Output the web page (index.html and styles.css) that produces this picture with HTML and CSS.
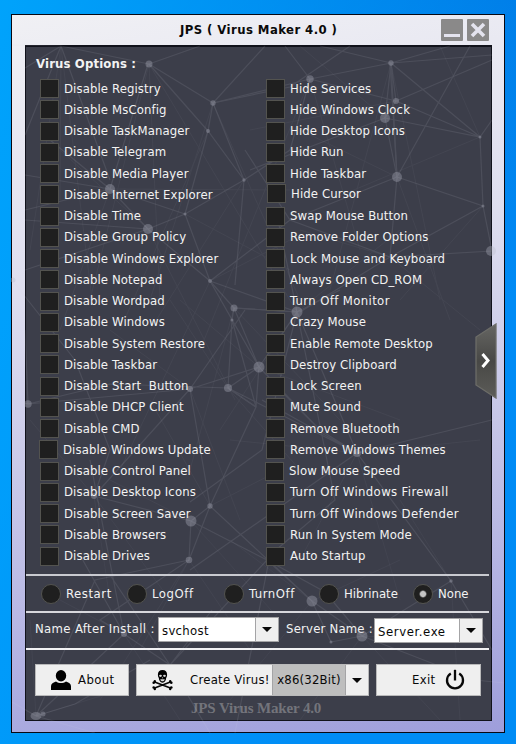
FILE: index.html
```html
<!DOCTYPE html>
<html lang="en">
<head>
<meta charset="utf-8">
<title>JPS ( Virus Maker 4.0 )</title>
<link rel="stylesheet" href="styles.css">
</head>
<body>
<main class="window">
  <header class="titlebar">
    <h1 class="title">JPS ( Virus Maker 4.0 )</h1>
    <div class="controls">
      <span class="control"><svg viewBox="0 0 22 22"><path d="M3 16.5h16" stroke="#e4e3ee" stroke-width="3"/></svg></span>
      <span class="control"><svg viewBox="0 0 22 22"><path d="M5 5l12 12M17 5L5 17" stroke="#e4e3ee" stroke-width="3.6"/></svg></span>
    </div>
  </header>
  <section class="panel">
    <h2 class="heading">Virus Options :</h2>
    <div class="options">
      <ul class="column">
        <li class="option">Disable Registry</li>
        <li class="option">Disable MsConfig</li>
        <li class="option">Disable TaskManager</li>
        <li class="option">Disable Telegram</li>
        <li class="option">Disable Media Player</li>
        <li class="option">Disable Internet Explorer</li>
        <li class="option">Disable Time</li>
        <li class="option">Disable Group Policy</li>
        <li class="option">Disable Windows Explorer</li>
        <li class="option">Disable Notepad</li>
        <li class="option">Disable Wordpad</li>
        <li class="option">Disable Windows</li>
        <li class="option">Disable System Restore</li>
        <li class="option">Disable Taskbar</li>
        <li class="option">Disable Start&nbsp; Button</li>
        <li class="option">Disable DHCP Client</li>
        <li class="option">Disable CMD</li>
        <li class="option outdent">Disable Windows Update</li>
        <li class="option">Disable Control Panel</li>
        <li class="option">Disable Desktop Icons</li>
        <li class="option">Disable Screen Saver</li>
        <li class="option">Disable Browsers</li>
        <li class="option">Disable Drives</li>
      </ul>
      <ul class="column">
        <li class="option">Hide Services</li>
        <li class="option">Hide Windows Clock</li>
        <li class="option">Hide Desktop Icons</li>
        <li class="option">Hide Run</li>
        <li class="option">Hide Taskbar</li>
        <li class="option raised">Hide Cursor</li>
        <li class="option">Swap Mouse Button</li>
        <li class="option">Remove Folder Options</li>
        <li class="option">Lock Mouse and Keyboard</li>
        <li class="option">Always Open CD_ROM</li>
        <li class="option wide">Turn Off Monitor</li>
        <li class="option"><span class="clipped">Crazy Mouse</span></li>
        <li class="option">Enable Remote Desktop</li>
        <li class="option">Destroy Clipboard</li>
        <li class="option">Lock Screen</li>
        <li class="option">Mute Sound</li>
        <li class="option">Remove Bluetooth</li>
        <li class="option">Remove Windows Themes</li>
        <li class="option outdent">Slow Mouse Speed</li>
        <li class="option wide">Turn Off Windows Firewall</li>
        <li class="option wide">Turn Off Windows Defender</li>
        <li class="option">Run In System Mode</li>
        <li class="option">Auto Startup</li>
      </ul>
    </div>
    <div class="radios">
      <span class="radio spaced">Restart</span>
      <span class="radio spaced">LogOff</span>
      <span class="radio spaced">TurnOff</span>
      <span class="radio">Hibrinate</span>
      <span class="radio checked">None</span>
    </div>
    <div class="names">
      <span class="label install">Name After Install :</span>
      <div class="combo combo-install"><span class="value">svchost</span><span class="drop"></span></div>
      <span class="label server">Server Name :</span>
      <div class="combo combo-server"><span class="value">Server.exe</span><span class="drop"></span></div>
    </div>
    <div class="actions">
      <div class="button about">
        <svg width="20" height="20" viewBox="0 0 20 20"><ellipse cx="10" cy="5.7" rx="5.2" ry="5.7"/><path d="M0 20v-3.5c0-2.7 1.5-4 5-5.1 3 2 7 2 10 0 3.500 1.100 5 2.400 5 5.100V20z"/></svg>
        <span>About</span>
      </div>
      <div class="button create">
        <span class="make">
          <svg width="21" height="21" viewBox="0 0 21 21">
            <path d="M2 11.800l17 6.400M19 11.800L2 18.200" stroke="#080808" stroke-width="1.700"/>
            <circle cx="1.700" cy="12.800" r="1.300"/><circle cx="2.800" cy="11.300" r="1.200"/><circle cx="19.300" cy="12.800" r="1.300"/><circle cx="18.200" cy="11.300" r="1.200"/>
            <circle cx="1.700" cy="17.500" r="1.300"/><circle cx="2.800" cy="19" r="1.200"/><circle cx="19.300" cy="17.500" r="1.300"/><circle cx="18.200" cy="19" r="1.200"/>
            <path d="M10.500 0C7.500 0 5.800 2 5.900 4.700c0 1.700.5 2.300.9 3.300.2 2.700 1.500 4.700 3.700 4.700s3.500-2 3.700-4.700c.4-1 .9-1.600.9-3.300C15.200 2 13.500 0 10.500 0z"/>
            <g fill="#d8d8d8"><ellipse cx="8.500" cy="5.800" rx="1.400" ry="1.100"/><ellipse cx="12.500" cy="5.800" rx="1.400" ry="1.100"/><path d="M10.500 7l-.7 1.200h1.400zM8.300 9.200h4.400c-.2 1.400-1 2-2.200 2s-2-.6-2.200-2z"/></g>
          </svg>
          <span>Create Virus!</span>
        </span>
        <span class="arch">x86(32Bit)</span>
        <span class="drop"></span>
      </div>
      <div class="button exit">
        <span>Exit</span>
        <svg width="20" height="22" viewBox="0 0 20 22" fill="none" stroke="#080808" stroke-width="2.300"><path d="M5.800 4.600A8 8 0 1 0 14.200 4.600"/><path d="M10 .8v10.700"/></svg>
      </div>
    </div>
    <footer class="watermark">JPS Virus Maker 4.0</footer>
  </section>
  <svg class="mesh" viewBox="11 14 494 719" aria-hidden="true">
    <g stroke="#d8dae6" stroke-width="1" opacity=".045" fill="none">
      <path d="M61 46L92 300M61 46L30 250M61 46L60 200M149 64L90 300M149 64L160 300M149 64L297 312M213 103L150 300M213 103L300 300M208 131L120 330M310 79L200 350M310 79L360 250M391 63L330 290M391 63L440 300M480 137L330 200M480 137L440 46M385 118L300 46M396 101L250 130"/>
      <path d="M110 189L60 330M110 189L290 190M148 229L60 150M148 229L235 400M185 214L290 270M244 180L150 330M210 281L120 470M210 281L290 240M234 308L190 470M234 308L340 420M259 367L180 300M259 367L400 420M297 312L220 430M297 312L400 230M397 177L300 130M397 177L450 320M483 206L400 300M390 257L300 230M390 257L480 330"/>
      <path d="M190 389L110 330M190 389L240 520M228 388L170 300M228 388L300 470M94 496L30 420M94 496L110 600M94 496L170 600M210 506L150 400M210 506L280 470M191 521L110 480M191 521L280 620M189 560L250 650M189 560L140 650M189 560L100 700M357 453L400 600M357 453L300 560M357 453L480 440M357 453L230 440M312 601L230 540M312 601L400 560M312 601L230 700M362 636L300 720M362 636L440 720M362 636L440 640M451 581L400 500M451 581L460 720M124 634L60 600M124 634L180 720M36 716L120 690M36 716L30 620"/>
    </g>
    <g stroke="#d8dae6" stroke-width="1.200" opacity=".1" fill="none">
      <path d="M61 46L25 68M61 46L149 64M61 46L25 135M61 46L110 180M149 64L213 103M149 64L208 131L244 180M213 103L208 131L185 214M213 103L244 180M149 64L200 46M213 103L310 79L391 63"/>
      <path d="M213 103L265 46M213 103L290 87L350 46M310 79L285 46M310 79L396 101L391 63L385 118L396 101M391 63L480 137L396 101M391 63L492 55M391 63L320 46M391 63L450 46M396 101L492 60M385 118L480 137L492 120M385 118L250 170M385 118L397 177L391 63"/>
      <path d="M110 189L25 175M110 189L148 229L185 214L244 180L290 150L310 79M110 189L185 214M110 189L148 64M244 180L235 285M148 229L25 220M148 229L25 270M148 229L210 281L234 308L232 320M148 229L110 189L50 140M185 214L210 281M110 189L25 210M210 281L290 220L397 177M210 281L297 312L234 308"/>
      <path d="M397 177L483 206L492 251L390 257L290 220L245 150M397 177L390 257L300 312M483 206L390 257M483 206L480 137M397 177L390 63M297 312L234 308L259 367L297 312M232 320L228 388L259 367M232 320L256 407L259 367M210 281L259 367"/>
      <path d="M297 312L278 220M297 312L340 290M297 312L262 450L190 502M297 312L335 500L270 555M12 280L75 360L110 450L94 496M28 404L190 389L259 367M28 404L110 384L228 388L256 407M190 389L245 310M190 389L210 506L189 560"/>
      <path d="M190 389L94 496L191 521M228 388L256 407L210 506M259 367L320 430L357 453M228 388L357 453M320 430L280 390M357 453L262 400M357 453L504 417M357 453L297 312M357 453L451 581L492 650M357 453L190 570M210 506L191 521L189 560L100 620L124 634"/>
      <path d="M210 506L312 601L362 636L325 592L267 560L191 521M189 560L95 580L36 716L124 634L170 665L267 560M36 716L75 704L150 660M124 634L80 555M124 634L90 460M170 665L110 575M170 665L212 610M170 665L210 733M331 642L312 601M331 642L362 636M362 636L451 581M362 636L475 680L504 683M312 601L267 560"/>
      <path d="M36 716L12 702M36 716L95 733M12 45L61 46M28 404L25 330M28 404L12 400M397 177L470 46M270 555L235 733"/>
    </g>
    <g fill="#b9bbc9" opacity=".33">
      <circle cx="149" cy="64" r="3.500"/><circle cx="213" cy="103" r="2.700"/><circle cx="208" cy="131" r="2"/><circle cx="310" cy="79" r="3.700"/><circle cx="391" cy="63" r="2.700"/><circle cx="396" cy="101" r="3"/><circle cx="385" cy="118" r="5"/><circle cx="110" cy="189" r="5"/><circle cx="148" cy="229" r="5"/><circle cx="185" cy="214" r="1.500"/><circle cx="244" cy="180" r="1.700"/><circle cx="397" cy="177" r="5"/><circle cx="480" cy="137" r="1.500"/><circle cx="483" cy="206" r="1.500"/><circle cx="491" cy="251" r="5"/><circle cx="210" cy="281" r="2"/><circle cx="234" cy="308" r="3.500"/><circle cx="232" cy="320" r="1.500"/><circle cx="297" cy="312" r="5.500"/><circle cx="259" cy="367" r="5.500"/><circle cx="228" cy="388" r="4"/><circle cx="190" cy="389" r="3"/><circle cx="28" cy="404" r="3.700"/><circle cx="94" cy="496" r="3"/><circle cx="210" cy="506" r="2.700"/><circle cx="191" cy="521" r="5.500"/><circle cx="189" cy="560" r="3.300"/><circle cx="357" cy="453" r="4"/><circle cx="312" cy="601" r="5.500"/><circle cx="362" cy="636" r="5.500"/><circle cx="331" cy="642" r="1.500"/><circle cx="451" cy="581" r="1.700"/><circle cx="124" cy="634" r="3"/><ellipse cx="36" cy="716" rx="5.500" ry="4"/><circle cx="43" cy="714" r="2.500"/><circle cx="13" cy="280" r="2.500"/>
    </g>
  </svg>
  <div class="side-tab">
    <svg viewBox="0 0 22 76">
      <defs><linearGradient id="tab" x2="0" y2="1"><stop stop-color="#666663"/><stop offset=".5" stop-color="#484846"/><stop offset="1" stop-color="#5c5c58"/></linearGradient></defs>
      <path d="M21 1L1 14v48l20 13z" fill="url(#tab)" stroke="#6c6c68" stroke-width="1.300"/><path d="M7.500 31l5.500 6.500-5.500 6.500" fill="none" stroke="#fff" stroke-width="3"/>
    </svg>
  </div>
</main>
</body>
</html>
```
FILE: styles.css
```css
* { box-sizing: border-box; }
body {
  margin: 0;
  width: 516px;
  height: 744px;
  overflow: hidden;
  padding: 14px 11px 11px;
  font: 13px/16px "DejaVu Sans Condensed", "DejaVu Sans", sans-serif;
  font-stretch: condensed;
  background:
    linear-gradient(110deg, rgba(0, 170, 255, .85), rgba(0, 150, 250, 0) 75%),
    linear-gradient(#007ae6, #008bf5 40%, #008cf5);
}
.window {
  position: relative;
  width: 494px;
  height: 719px;
  padding: 0 12px 12px 13px;
  border: 1px solid #080812;
  background: linear-gradient(170deg, #f0f0f4, #dedeef 35%, #b8b8e4 75%, #9e9edb);
}
.titlebar {
  display: flex;
  align-items: center;
  height: 30px;
}
.title {
  margin: 0 0 0 155px;
  width: 160px;
  white-space: nowrap;
  font-size: 13px;
  letter-spacing: .42px;
  color: #0a0a0a;
}
.controls {
  display: flex;
  gap: 4px;
  margin-left: 101px;
}
.control {
  width: 22px;
  height: 22px;
  background: #8a8989;
  border-radius: 1px;
}
.control svg { display: block; }
.panel {
  width: 467px;
  height: 676px;
  border: 1px solid #11121b;
  border-top-width: 2px;
  background: #3c3e4a;
  color: #f3f3f3;
}
.heading {
  margin: 9px 0 6px 10px;
  font-size: 13px;
  line-height: 16px;
  letter-spacing: .15px;
}
.options {
  display: grid;
  grid-template-columns: 226px 1fr;
  padding-left: 14px;
  height: 496px;
}
.column {
  list-style: none;
  margin: 0;
  padding: 0;
}
.option {
  position: relative;
  display: flex;
  align-items: center;
  gap: 5px;
  height: 21.25px;
  white-space: nowrap;
  letter-spacing: .11px;
}
.option::before {
  content: "";
  flex: none;
  width: 17px;
  height: 17px;
  border: 1px solid #53534f;
  background: #1f1f1f;
}
.wide { letter-spacing: .37px; }
.outdent { margin-left: -1px; }
.raised { padding: 0 0 2px 1px; }
.clipped {
  width: 76px;
  overflow: hidden;
}
.radios {
  display: grid;
  grid-template-columns: 86px 97px 95px 94px auto;
  align-items: center;
  width: 463px;
  height: 37px;
  padding-left: 15px;
  border-top: 2px solid #c9cad0;
}
.radio {
  position: relative;
  display: flex;
  align-items: center;
  gap: 5px;
}
.spaced { letter-spacing: .55px; }
.radio::before {
  content: "";
  width: 18px;
  height: 18px;
  border: 1px solid #53534f;
  border-radius: 50%;
  background: #1f1f1f;
}
.checked::before { background: radial-gradient(circle, #c4c4c4 0 2.5px, #1f1f1f 4px); }
.names {
  display: flex;
  align-items: flex-start;
  width: 463px;
  height: 37px;
  padding: 4px 0 0 9px;
  border-top: 2px solid #d7d7dc;
}
.label {
  margin-top: 4px;
  white-space: nowrap;
}
.install { width: 123px; letter-spacing: .35px; }
.server { width: 88px; margin-left: 7px; letter-spacing: .2px; }
.combo {
  display: flex;
  height: 25px;
  border: 1px solid #a4a4a6;
  background: #fff;
  color: #080808;
}
.combo-install { width: 121px; letter-spacing: .3px; }
.combo-server { width: 109px; margin-top: 1px; letter-spacing: .6px; }
.value { flex: 1; padding: 5px 0 0 3px; }
.drop {
  display: grid;
  place-items: center;
  width: 23px;
  border-left: 1px solid #a4a4a6;
  background: #efefef;
}
.drop::before {
  content: "";
  border: 5px solid transparent;
  border-top-color: #080808;
  border-bottom: 0;
}
.actions {
  display: flex;
  gap: 7px;
  width: 463px;
  height: 48px;
  padding: 14px 0 0 9px;
  border-top: 2px solid #f1f1f3;
}
.button {
  display: flex;
  align-items: center;
  height: 32px;
  border: 1px solid #b9b9ba;
  background: #efefef;
  color: #080808;
  white-space: nowrap;
}
.about { width: 94px; padding-left: 15px; gap: 7px; letter-spacing: .4px; }
.create { width: 233px; align-items: stretch; }
.make { display: flex; flex: 1; align-items: center; padding-left: 15px; gap: 17px; letter-spacing: .25px; }
.arch { display: grid; place-items: center; width: 73px; background: #bebebe; border-left: 1px solid #a4a4a6; letter-spacing: .2px; }
.exit { width: 105px; padding-left: 35px; gap: 10px; letter-spacing: .3px; }
.watermark {
  margin-left: 165px;
  line-height: 24px;
  font-family: "Liberation Serif", serif;
  font-size: 15px;
  font-weight: bold;
  letter-spacing: -.15px;
  color: #73747b;
}
.mesh {
  position: absolute;
  left: -1px;
  top: -1px;
  width: 494px;
  height: 719px;
  pointer-events: none;
}
.side-tab {
  position: absolute;
  left: 463px;
  top: 308px;
  width: 22px;
  height: 76px;
}
.option, .radio, .combo, .button, .side-tab { z-index: 1; }
.combo, .button { position: relative; }
```
